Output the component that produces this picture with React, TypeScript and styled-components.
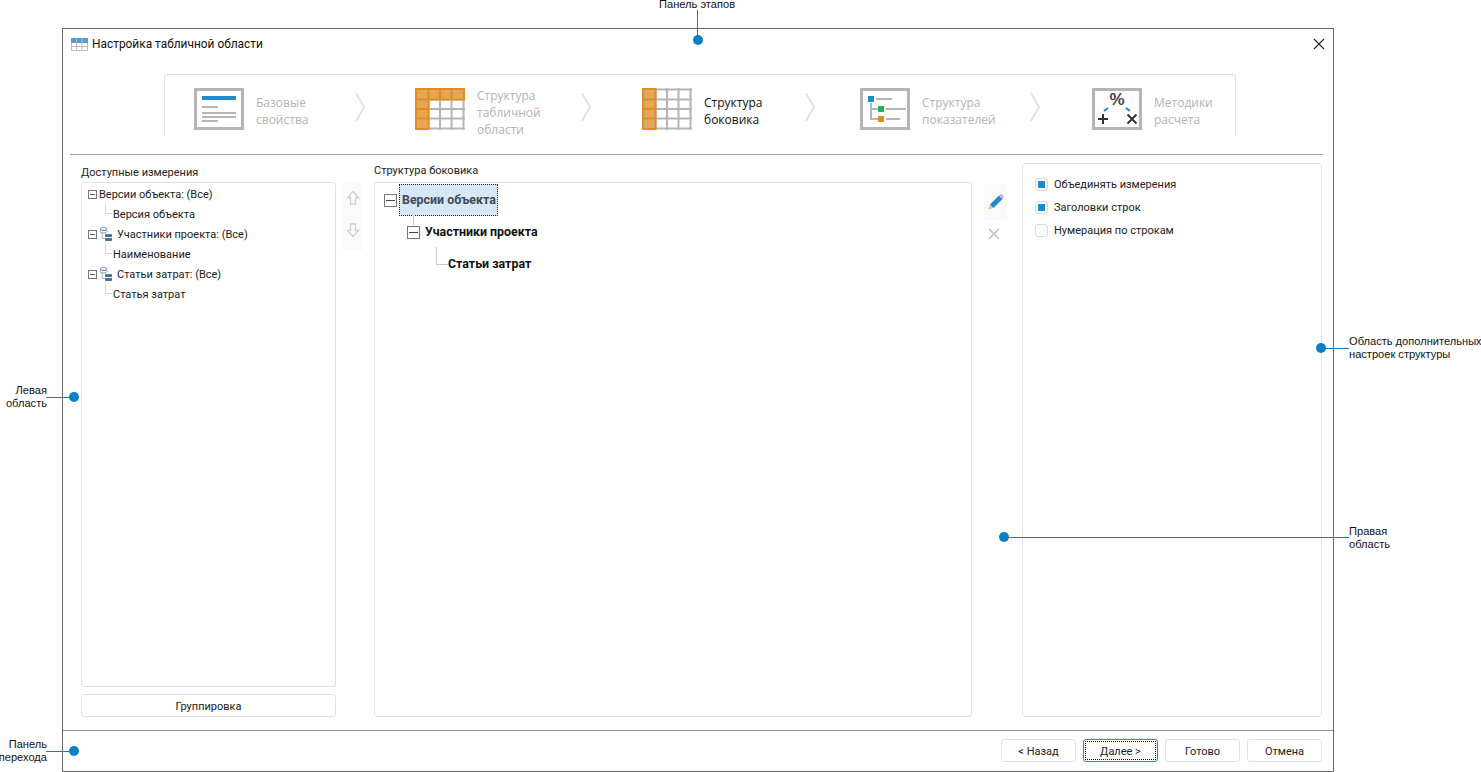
import React from "react";
import styled, { createGlobalStyle } from "styled-components";

const GlobalStyle = createGlobalStyle`
  html, body {
    margin: 0;
    padding: 0;
    background: #fff;
  }
`;

const Page = styled.div`
  position: relative;
  width: 1481px;
  height: 772px;
  padding: 28px 0 0 62px;
  box-sizing: border-box;
  overflow: hidden;
  font-family: Roboto, "Open Sans", sans-serif;
  font-size: 11px;
  color: #1a1a1a;
`;

const Window = styled.div`
  width: 1272px;
  height: 744px;
  box-sizing: border-box;
  border: 1px solid #666;
  display: flex;
  flex-direction: column;
`;

const TitleBar = styled.div`
  height: 30px;
  flex: none;
  display: flex;
  align-items: center;
  gap: 4px;
  padding: 0 8px;
  font-size: 11.9px;
  color: #111;
`;

const CloseButton = styled.button`
  margin-left: auto;
  border: 0;
  padding: 0;
  background: none;
  width: 12px;
  height: 12px;
  display: flex;
`;

const StepsArea = styled.div`
  height: 96px;
  flex: none;
  margin: 0 10px 0 7px;
  padding: 15px 0 0 94px;
  box-sizing: border-box;
  border-bottom: 1px solid #a5a5a5;
`;

const Steps = styled.div`
  width: 1072px;
  height: 61px;
  box-sizing: border-box;
  border: 1px solid #e2e2e2;
  border-bottom: 0;
  border-radius: 3px 3px 0 0;
  padding: 13px 0 0 29px;
  display: flex;
  align-items: flex-start;
`;

const StepIcon = styled.svg`
  width: 50px;
  height: 42px;
  flex: none;
  margin-right: 12px;
`;

const StepLabel = styled.div<{ $width: number; $active?: boolean; $lines?: number }>`
  width: ${(p) => p.$width}px;
  flex: none;
  font-family: "Open Sans", sans-serif;
  font-size: 12px;
  line-height: 17px;
  margin-top: ${(p) => (p.$lines === 3 ? -1 : 6)}px;
  color: ${(p) => (p.$active ? "#111" : "#b3b3b3")};
`;

const Chevron = styled.svg<{ $after: number }>`
  width: 10px;
  height: 30px;
  flex: none;
  margin: 4px ${(p) => p.$after}px 0 0;
`;

const Body = styled.div`
  flex: 1;
  min-height: 0;
  display: grid;
  grid-template-columns: 255px 38px 598px 50px 300px;
  padding: 8px 10px 13px 18px;
`;

const Column = styled.div`
  display: flex;
  flex-direction: column;
  min-height: 0;
`;

const PaneLabel = styled.div<{ $top: number; $bottom: number }>`
  height: 15px;
  line-height: 15px;
  margin: ${(p) => p.$top}px 0 ${(p) => p.$bottom}px;
  flex: none;
  color: #222;
`;

const Pane = styled.div`
  flex: 1;
  box-sizing: border-box;
  border: 1px solid #e1e1e1;
  border-radius: 3px;
  min-height: 0;
`;

const DimTree = styled(Pane)`
  padding: 1px 0 0 6px;
`;

const DimRow = styled.div<{ $child?: boolean }>`
  position: relative;
  height: 20px;
  display: flex;
  align-items: center;
  white-space: nowrap;
  padding-left: ${(p) => (p.$child ? 25 : 0)}px;
`;

const DimExpander = styled.span`
  width: 9px;
  height: 9px;
  flex: none;
  box-sizing: border-box;
  border: 1px solid #777;
  margin-right: 2px;
  display: flex;
  align-items: center;
  justify-content: center;
  &::after {
    content: "";
    width: 5px;
    height: 1px;
    background: #555;
  }
`;

const DimConnector = styled.span`
  position: absolute;
  left: 17px;
  top: -1px;
  width: 6px;
  height: 10px;
  border-left: 1px solid #d8d8d8;
  border-bottom: 1px solid #d8d8d8;
`;

const DimIcon = styled.svg`
  width: 14px;
  height: 15px;
  flex: none;
  margin-right: 4px;
`;

const PlainButton = styled.button<{ $focused?: boolean }>`
  box-sizing: border-box;
  background: #fff;
  border: 1px solid ${(p) => (p.$focused ? "#2f86c4" : "#e1e1e1")};
  border-radius: 3px;
  font: inherit;
  color: #222;
  padding: 2px 0 0;
  position: relative;
  ${(p) =>
    p.$focused
      ? `&::after {
          content: "";
          position: absolute;
          inset: 1px;
          border: 1px dotted #111;
        }`
      : ""}
`;

const GroupButton = styled(PlainButton)`
  height: 23px;
  margin-top: 7px;
  flex: none;
`;

const ArrowColumn = styled.div`
  display: flex;
  flex-direction: column;
  margin: 20px 0 0 6px;
  width: 21px;
  height: 67px;
  background: #fafafa;
  align-items: center;
  padding-top: 7px;
  box-sizing: border-box;
  gap: 16px;
`;

const ToolIcon = styled.svg`
  width: 16px;
  height: 16px;
  display: block;
`;

const CrossIcon = styled(ToolIcon)`
  margin-right: 4px;
`;

const StructureTree = styled(Pane)`
  padding: 1px 0 0 9px;
`;

const StructureRow = styled.div<{ $indent: number }>`
  position: relative;
  height: 32px;
  display: flex;
  align-items: center;
  padding-left: ${(p) => p.$indent}px;
  font-size: 12.4px;
  line-height: 14px;
  font-weight: 700;
  color: #111;
  white-space: nowrap;
`;

const StructureExpander = styled.span`
  width: 13px;
  height: 13px;
  flex: none;
  box-sizing: border-box;
  border: 1px solid #777;
  margin-right: 5px;
  display: flex;
  align-items: center;
  justify-content: center;
  &::after {
    content: "";
    width: 9px;
    height: 1px;
    background: #444;
  }
`;

const Selected = styled.span`
  margin-left: -3px;
  height: 32px;
  width: 99px;
  box-sizing: border-box;
  border: 1px dotted #222;
  background: #d6e7f5;
  color: #3f4a55;
  display: flex;
  align-items: center;
  padding-left: 2px;
`;

const VerticalLink = styled.span`
  position: absolute;
  left: 29px;
  top: 30px;
  height: 11px;
  width: 1px;
  background: #c8c8c8;
`;

const ElbowLink = styled.span`
  position: absolute;
  left: 52px;
  top: -1px;
  width: 11px;
  height: 17px;
  border-left: 1px solid #c8c8c8;
  border-bottom: 1px solid #c8c8c8;
`;

const ToolColumn = styled.div`
  display: flex;
  flex-direction: column;
  align-items: center;
  gap: 6px;
  width: 23px;
  margin: 21px 0 0 12px;
`;

const PencilSlot = styled.div`
  width: 23px;
  height: 36px;
  background: #fafafa;
  display: flex;
  align-items: center;
  justify-content: center;
`;

const OptionsPane = styled(Pane)`
  padding: 9px 12px;
  display: flex;
  flex-direction: column;
`;

const OptionRow = styled.label`
  height: 23px;
  display: flex;
  align-items: center;
  gap: 6px;
  color: #222;
`;

const CheckBox = styled.span<{ $on?: boolean }>`
  width: 13px;
  height: 13px;
  box-sizing: border-box;
  border: 1px solid #dcdcdc;
  border-radius: 3px;
  display: flex;
  align-items: center;
  justify-content: center;
  &::after {
    content: "";
    width: 7px;
    height: 7px;
    background: ${(p) => (p.$on ? "#1f8ace" : "transparent")};
  }
`;

const Footer = styled.div`
  height: 41px;
  flex: none;
  box-sizing: border-box;
  border-top: 1px solid #8f8f8f;
  display: flex;
  justify-content: flex-end;
  align-items: flex-start;
  gap: 7px;
  padding: 8px 11px 0 0;
`;

const FooterButton = styled(PlainButton)`
  width: 75px;
  height: 23px;
`;

const CalloutText = styled.div<{ $x: number; $y: number; $right?: boolean; $line?: number }>`
  position: absolute;
  top: ${(p) => p.$y}px;
  ${(p) => (p.$right ? `right: ${1481 - p.$x}px; text-align: right;` : `left: ${p.$x}px;`)}
  font-family: "Liberation Sans", Arial, sans-serif;
  font-size: 11.1px;
  line-height: ${(p) => p.$line ?? 13}px;
  color: #111;
  white-space: nowrap;
`;

const CalloutLine = styled.div<{ $x: number; $y: number; $w?: number; $h?: number }>`
  position: absolute;
  left: ${(p) => p.$x}px;
  top: ${(p) => p.$y}px;
  width: ${(p) => p.$w ?? 1}px;
  height: ${(p) => p.$h ?? 1}px;
  background: #0a7fc4;
`;

const CalloutDot = styled.div<{ $x: number; $y: number }>`
  position: absolute;
  left: ${(p) => p.$x - 5}px;
  top: ${(p) => p.$y - 5}px;
  width: 10px;
  height: 10px;
  border-radius: 50%;
  background: #0a7fc4;
`;

const GREY = "#b5b5b5";
const ORANGE = "#e38c22";
const ORANGE_FILL = "#eaa551";

function GridCells({ fillTop }: { fillTop?: boolean }) {
  const xs = [1.5, 13.5, 25, 36.5, 48.5];
  const ys = [1.5, 11.5, 21, 30.5, 40.5];
  return (
    <>
      {[0, 1, 2, 3].map((r) =>
        [0, 1, 2, 3].map((c) =>
          (fillTop && r === 0) || c === 0 ? (
            <rect key={`${r}-${c}`} x={xs[c]} y={ys[r]} width={xs[c + 1] - xs[c]} height={ys[r + 1] - ys[r]} fill={ORANGE_FILL} />
          ) : null,
        ),
      )}
      {xs.map((x) => (
        <line key={x} x1={x} y1="0" x2={x} y2="42" stroke={GREY} strokeWidth="2" />
      ))}
      {ys.map((y) => (
        <line key={y} x1="0" y1={y} x2="50" y2={y} stroke={GREY} strokeWidth="2" />
      ))}
      {fillTop && <path d="M1 1H49V11.5H13.5V41H1Z" fill="none" stroke={ORANGE} strokeWidth="2" />}
      {!fillTop && <rect x="1" y="1" width="12.5" height="40" fill="none" stroke={ORANGE} strokeWidth="2" />}
      {[1, 2, 3].map((i) => (
        <line key={i} x1="0" y1={ys[i]} x2="13.5" y2={ys[i]} stroke={ORANGE} strokeWidth="2" />
      ))}
      {fillTop &&
        [1, 2, 3].map((i) => <line key={i} x1={xs[i]} y1="0" x2={xs[i]} y2="12" stroke={ORANGE} strokeWidth="2" />)}
    </>
  );
}

const steps = [
  {
    label: ["Базовые", "свойства"],
    width: 99,
    after: 50,
    icon: (
      <>
        <rect x="1.5" y="1.5" width="47" height="39" fill="none" stroke={GREY} strokeWidth="3" />
        <rect x="8" y="8" width="34" height="4" fill="#1f8ace" />
        <rect x="8" y="18" width="16" height="2" fill={GREY} />
        <rect x="8" y="24" width="34" height="2" fill={GREY} />
        <rect x="8" y="28" width="34" height="2" fill={GREY} />
        <rect x="8" y="32" width="16" height="2" fill={GREY} />
      </>
    ),
  },
  {
    label: ["Структура", "табличной", "области"],
    width: 104,
    after: 51,
    icon: <GridCells fillTop />,
  },
  {
    label: ["Структура", "боковика"],
    width: 101,
    after: 45,
    active: true,
    icon: <GridCells />,
  },
  {
    label: ["Структура", "показателей"],
    width: 108,
    after: 52,
    icon: (
      <>
        <rect x="1.5" y="1.5" width="47" height="39" fill="none" stroke={GREY} strokeWidth="3" />
        <rect x="8" y="8" width="6" height="6" fill="#1f8ace" />
        <rect x="16" y="10" width="16" height="2" fill={GREY} />
        <path d="M11 15V31H18M11 21H18" fill="none" stroke={GREY} strokeWidth="2" />
        <rect x="18" y="18" width="6" height="6" fill="#22b35e" />
        <rect x="26" y="20" width="20" height="2" fill={GREY} />
        <rect x="18" y="28" width="6" height="6" fill={ORANGE} />
        <rect x="26" y="30" width="14" height="2" fill={GREY} />
      </>
    ),
  },
  {
    label: ["Методики", "расчета"],
    width: 80,
    after: 0,
    icon: (
      <>
        <rect x="1.5" y="1.5" width="47" height="39" fill="none" stroke={GREY} strokeWidth="3" />
        <text x="25" y="17" textAnchor="middle" fontFamily="Liberation Sans, sans-serif" fontSize="17" fontWeight="700" fill="#444">
          %
        </text>
        <path d="M12 23L16 20M38 23L34 20" stroke="#1f8ace" strokeWidth="2" fill="none" />
        <path d="M11 26V36M6 31H16M35.5 26.5L44.5 35.5M44.5 26.5L35.5 35.5" stroke="#333" strokeWidth="2" fill="none" />
      </>
    ),
  },
];

function DimensionIcon() {
  return (
    <DimIcon viewBox="0 0 14 15">
      <path d="M3 6V11.5H6" fill="none" stroke="#b0b0b0" />
      <ellipse cx="4.5" cy="2" rx="3.5" ry="1.5" fill="#fff" stroke="#7f96b2" />
      <ellipse cx="4.5" cy="4.5" rx="3.5" ry="1.5" fill="none" stroke="#7f96b2" />
      <rect x="6" y="7" width="7" height="7" rx="1" fill="#4f7198" />
      <path d="M6 10.5H13" stroke="#fff" />
    </DimIcon>
  );
}

const dimensions = [
  { name: "Версии объекта: (Все)", attr: "Версия объекта" },
  { name: "Участники проекта: (Все)", attr: "Наименование", hasIcon: true },
  { name: "Статьи затрат: (Все)", attr: "Статья затрат", hasIcon: true },
];

const options = [
  { label: "Объединять измерения", on: true },
  { label: "Заголовки строк", on: true },
  { label: "Нумерация по строкам", on: false },
];

function App() {
  return (
    <Page>
      <GlobalStyle />
      <Window>
        <TitleBar>
          <svg width="17" height="13" viewBox="0 0 17 13">
            <rect x="0.5" y="0.5" width="16" height="12" fill="#fff" stroke="#bdbdbd" />
            <rect x="0.5" y="0.5" width="16" height="4" fill="#4f9fd6" stroke="#4f9fd6" />
            <path d="M5.5 0V13M11 0V13M0 8.5H17" stroke="#bdbdbd" />
          </svg>
          Настройка табличной области
          <CloseButton aria-label="close">
            <svg width="12" height="12" viewBox="0 0 12 12">
              <path d="M1 1L11 11M11 1L1 11" stroke="#222" strokeWidth="1.1" />
            </svg>
          </CloseButton>
        </TitleBar>

        <StepsArea>
          <Steps>
            {steps.map((step, i) => (
              <React.Fragment key={step.label.join(" ")}>
                <StepIcon viewBox="0 0 50 42">{step.icon}</StepIcon>
                <StepLabel $width={step.width} $active={step.active} $lines={step.label.length}>
                  {step.label.map((line) => (
                    <div key={line}>{line}</div>
                  ))}
                </StepLabel>
                {i < steps.length - 1 && (
                  <Chevron $after={step.after} viewBox="0 0 10 30">
                    <path d="M1 1L9 15L1 29" fill="none" stroke="#e2e2e2" strokeWidth="2" />
                  </Chevron>
                )}
              </React.Fragment>
            ))}
          </Steps>
        </StepsArea>

        <Body>
          <Column>
            <PaneLabel $top={2} $bottom={2}>Доступные измерения</PaneLabel>
            <DimTree>
              {dimensions.map((dim) => (
                <React.Fragment key={dim.name}>
                  <DimRow>
                    <DimExpander />
                    {dim.hasIcon && <DimensionIcon />}
                    {dim.name}
                  </DimRow>
                  <DimRow $child>
                    <DimConnector />
                    {dim.attr}
                  </DimRow>
                </React.Fragment>
              ))}
            </DimTree>
            <GroupButton>Группировка</GroupButton>
          </Column>

          <ArrowColumn>
            <ToolIcon viewBox="0 0 16 16">
              <path d="M8 1.5L13.5 7.5H10.5V14H5.5V7.5H2.5Z" fill="none" stroke="#cfcfcf" strokeWidth="1.3" />
            </ToolIcon>
            <ToolIcon viewBox="0 0 16 16">
              <path d="M8 14.5L2.5 8.5H5.5V2H10.5V8.5H13.5Z" fill="none" stroke="#cfcfcf" strokeWidth="1.3" />
            </ToolIcon>
          </ArrowColumn>

          <Column>
            <PaneLabel $top={0} $bottom={4}>Структура боковика</PaneLabel>
            <StructureTree>
              <StructureRow $indent={0}>
                <StructureExpander />
                <Selected>Версии объекта</Selected>
                <VerticalLink />
              </StructureRow>
              <StructureRow $indent={23}>
                <StructureExpander />
                Участники проекта
              </StructureRow>
              <StructureRow $indent={64}>
                <ElbowLink />
                Статьи затрат
              </StructureRow>
            </StructureTree>
          </Column>

          <ToolColumn>
            <PencilSlot>
              <ToolIcon viewBox="0 0 16 16">
                <path d="M0.5 15.5L2 10.5L5.5 14Z" fill="#f2c078" />
                <path d="M2 10.5L11 1.5L14.5 5L5.5 14Z" fill="#1f8ace" />
                <path d="M11.5 1L13 0L16 3L15 4.5Z" fill="#c792d8" />
              </ToolIcon>
            </PencilSlot>
            <CrossIcon viewBox="0 0 16 16">
              <path d="M3 3L13 13M13 3L3 13" stroke="#bdbdbd" strokeWidth="1.5" />
            </CrossIcon>
          </ToolColumn>

          <OptionsPane>
            {options.map((opt) => (
              <OptionRow key={opt.label}>
                <CheckBox $on={opt.on} />
                {opt.label}
              </OptionRow>
            ))}
          </OptionsPane>
        </Body>

        <Footer>
          <FooterButton>&lt; Назад</FooterButton>
          <FooterButton $focused>Далее &gt;</FooterButton>
          <FooterButton>Готово</FooterButton>
          <FooterButton>Отмена</FooterButton>
        </Footer>
      </Window>

      <CalloutText $x={659} $y={0} $line={9}>Панель этапов</CalloutText>
      <CalloutLine $x={697} $y={10} $h={30} />
      <CalloutDot $x={697.5} $y={40} />

      <CalloutText $x={47} $y={384} $right>
        Левая
        <br />
        область
      </CalloutText>
      <CalloutLine $x={46} $y={397} $w={28} />
      <CalloutDot $x={74} $y={397} />

      <CalloutText $x={1349} $y={335}>
        Область дополнительных
        <br />
        настроек структуры
      </CalloutText>
      <CalloutLine $x={1321} $y={348} $w={28} />
      <CalloutDot $x={1321} $y={348} />

      <CalloutText $x={1349} $y={525}>
        Правая
        <br />
        область
      </CalloutText>
      <CalloutLine $x={1004} $y={537} $w={345} />
      <CalloutDot $x={1004} $y={537} />

      <CalloutText $x={47} $y={738} $right>
        Панель
        <br />
        перехода
      </CalloutText>
      <CalloutLine $x={46} $y={751} $w={28} />
      <CalloutDot $x={74} $y={751} />
    </Page>
  );
}

export default App;
